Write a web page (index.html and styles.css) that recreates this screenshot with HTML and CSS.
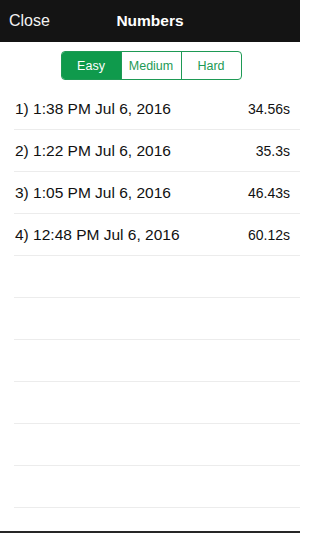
FILE: index.html
```html
<!DOCTYPE html>
<html>
<head>
<meta charset="utf-8">
<link rel="stylesheet" href="styles.css">
</head>
<body>
<div class="app">
  <header class="navbar">
    <span class="close">Close</span>
    <span class="title">Numbers</span>
  </header>
  <div class="seg-wrap">
    <div class="segment">
      <span class="seg active">Easy</span>
      <span class="seg">Medium</span>
      <span class="seg">Hard</span>
    </div>
  </div>
  <ul class="list">
    <li class="row"><span class="date">1) 1:38 PM Jul 6, 2016</span><span class="time">34.56s</span></li>
    <li class="row"><span class="date">2) 1:22 PM Jul 6, 2016</span><span class="time">35.3s</span></li>
    <li class="row"><span class="date">3) 1:05 PM Jul 6, 2016</span><span class="time">46.43s</span></li>
    <li class="row"><span class="date">4) 12:48 PM Jul 6, 2016</span><span class="time">60.12s</span></li>
    <li class="row"></li>
    <li class="row"></li>
    <li class="row"></li>
    <li class="row"></li>
    <li class="row"></li>
    <li class="row"></li>
  </ul>
  <div class="bottom-edge"></div>
</div>
</body>
</html>
```
FILE: styles.css
```css
html, body {
  margin: 0;
  padding: 0;
  background: #fff;
}
body {
  font-family: "Liberation Sans", Arial, sans-serif;
  color: #000;
}
.app {
  width: 300px;
  height: 533px;
  display: flex;
  flex-direction: column;
  overflow: hidden;
}
.navbar {
  height: 42px;
  background: #141414;
  color: #fff;
  display: flex;
  align-items: center;
  position: relative;
  flex-shrink: 0;
}
.close {
  font-size: 16px;
  margin-left: 9px;
  color: #f2f2f2;
}
.title {
  position: absolute;
  left: 0;
  right: 0;
  text-align: center;
  font-weight: bold;
  font-size: 15.5px;
  pointer-events: none;
}
.seg-wrap {
  display: flex;
  justify-content: center;
  padding-top: 9px;
  height: 37px;
  flex-shrink: 0;
}
.segment {
  display: flex;
  height: 27px;
  border: 1px solid #1e9a55;
  border-radius: 4px;
  overflow: hidden;
  margin-left: 2px;
}
.seg {
  width: 59px;
  display: flex;
  align-items: center;
  justify-content: center;
  font-size: 12.5px;
  color: #1e9a55;
  border-left: 1px solid #1e9a55;
}
.seg:first-child {
  border-left: none;
}
.seg.active {
  background: #0f9a4c;
  color: #fff;
}
.list {
  list-style: none;
  margin: 0;
  padding: 0;
  flex: 1;
}
.row {
  height: 41px;
  margin-left: 14px;
  padding-right: 10px;
  border-bottom: 1px solid #ececec;
  display: flex;
  align-items: center;
  justify-content: space-between;
}
.date {
  font-size: 15.5px;
  margin-left: 1px;
  color: #111;
}
.time {
  font-size: 14px;
  color: #111;
}
.bottom-edge {
  height: 2px;
  background: #262626;
  flex-shrink: 0;
}
```
